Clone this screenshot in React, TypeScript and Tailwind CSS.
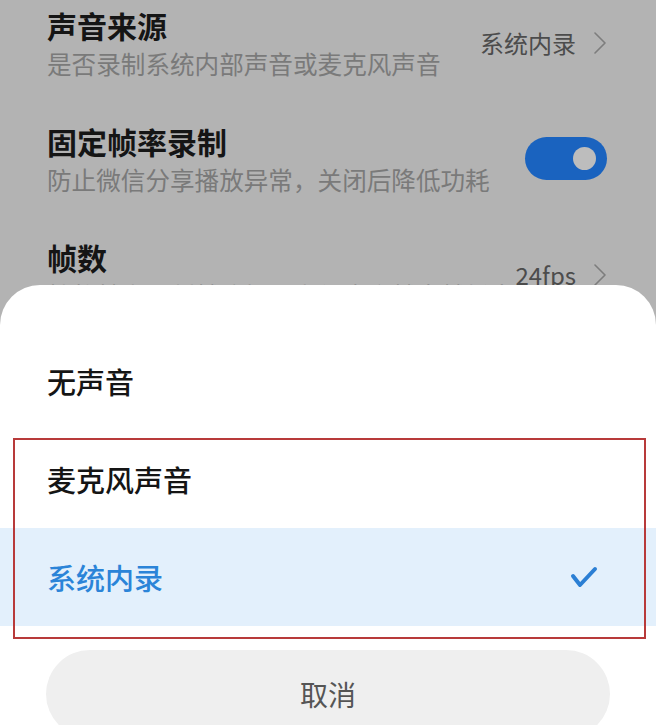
import React from "react";

const FONT = { fontFamily: '"Noto Sans CJK SC", "Noto Sans", sans-serif' };

function Chevron() {
  return (
    <svg width="14" height="22" viewBox="0 0 14 22" className="shrink-0">
      <polyline points="2,1 12,11 2,21" fill="none" stroke="#7d7d7d" strokeWidth="1.6" strokeLinecap="round" strokeLinejoin="round" />
    </svg>
  );
}

function Check() {
  return (
    <svg width="28" height="24" viewBox="0 0 28 24">
      <polyline points="3,11 10,20 25,4" fill="none" stroke="#2b7fd4" strokeWidth="4" strokeLinecap="round" strokeLinejoin="round" />
    </svg>
  );
}

function SettingRow({ title, desc, right }: { title: string; desc: string; right: React.ReactNode }) {
  return (
    <div className="flex items-center justify-between">
      <div className="flex flex-col gap-[5px]">
        <div className="text-[30px] leading-[36px] font-bold text-[#151515]">{title}</div>
        <div className="text-[24.6px] leading-[30px] text-[#7a7a7a]">{desc}</div>
      </div>
      {right}
    </div>
  );
}

function Value({ text }: { text: string }) {
  return (
    <div className="flex items-center gap-[17px]">
      <span className="text-[24px] leading-[30px] text-[#4c4c4c]">{text}</span>
      <Chevron />
    </div>
  );
}

function Toggle() {
  return (
    <div className="w-[82px] h-[43px] rounded-full bg-[#1a63bf] flex items-center justify-end pr-[11px]">
      <div className="w-[23px] h-[23px] rounded-full bg-[#bdbdbd]" />
    </div>
  );
}

export default function App() {
  const options = [
    { label: "无声音", selected: false },
    { label: "麦克风声音", selected: false },
    { label: "系统内录", selected: true },
  ];

  return (
    <div className="w-[656px] h-[725px] relative overflow-hidden bg-[#b3b3b3]" style={FONT}>
      {/* settings list behind the sheet */}
      <div className="flex flex-col gap-[45px] pt-[7px] pl-[47px] pr-[49px]">
        <SettingRow title="声音来源" desc="是否录制系统内部声音或麦克风声音" right={<Value text="系统内录" />} />
        <SettingRow title="固定帧率录制" desc="防止微信分享播放异常，关闭后降低功耗" right={<Toggle />} />
        <SettingRow title="帧数" desc="帧数越高录制越流畅，文件也会越大越耗电" right={<Value text="24fps" />} />
      </div>

      {/* bottom sheet */}
      <div className="absolute left-0 right-0 top-[285px] bottom-0 bg-white rounded-t-[40px] pt-[47px]">
        {options.map((o) => (
          <div
            key={o.label}
            className={`h-[98px] flex items-center justify-between pl-[47px] pr-[58px] ${o.selected ? "bg-[#e3f0fc]" : ""}`}
          >
            <span className={`text-[29px] leading-[36px] font-medium ${o.selected ? "text-[#2b84d8]" : "text-[#151515]"}`}>
              {o.label}
            </span>
            {o.selected && <Check />}
          </div>
        ))}
        <div className="mt-[24px] mx-[46px] h-[88px] rounded-full bg-[#efefef] flex items-center justify-center">
          <span className="text-[28px] leading-[36px] text-[#555555]">取消</span>
        </div>
      </div>

      {/* red annotation box */}
      <div className="absolute left-[13px] top-[438px] w-[633px] h-[201px] border-2 border-[#b83a3a]" />
    </div>
  );
}
